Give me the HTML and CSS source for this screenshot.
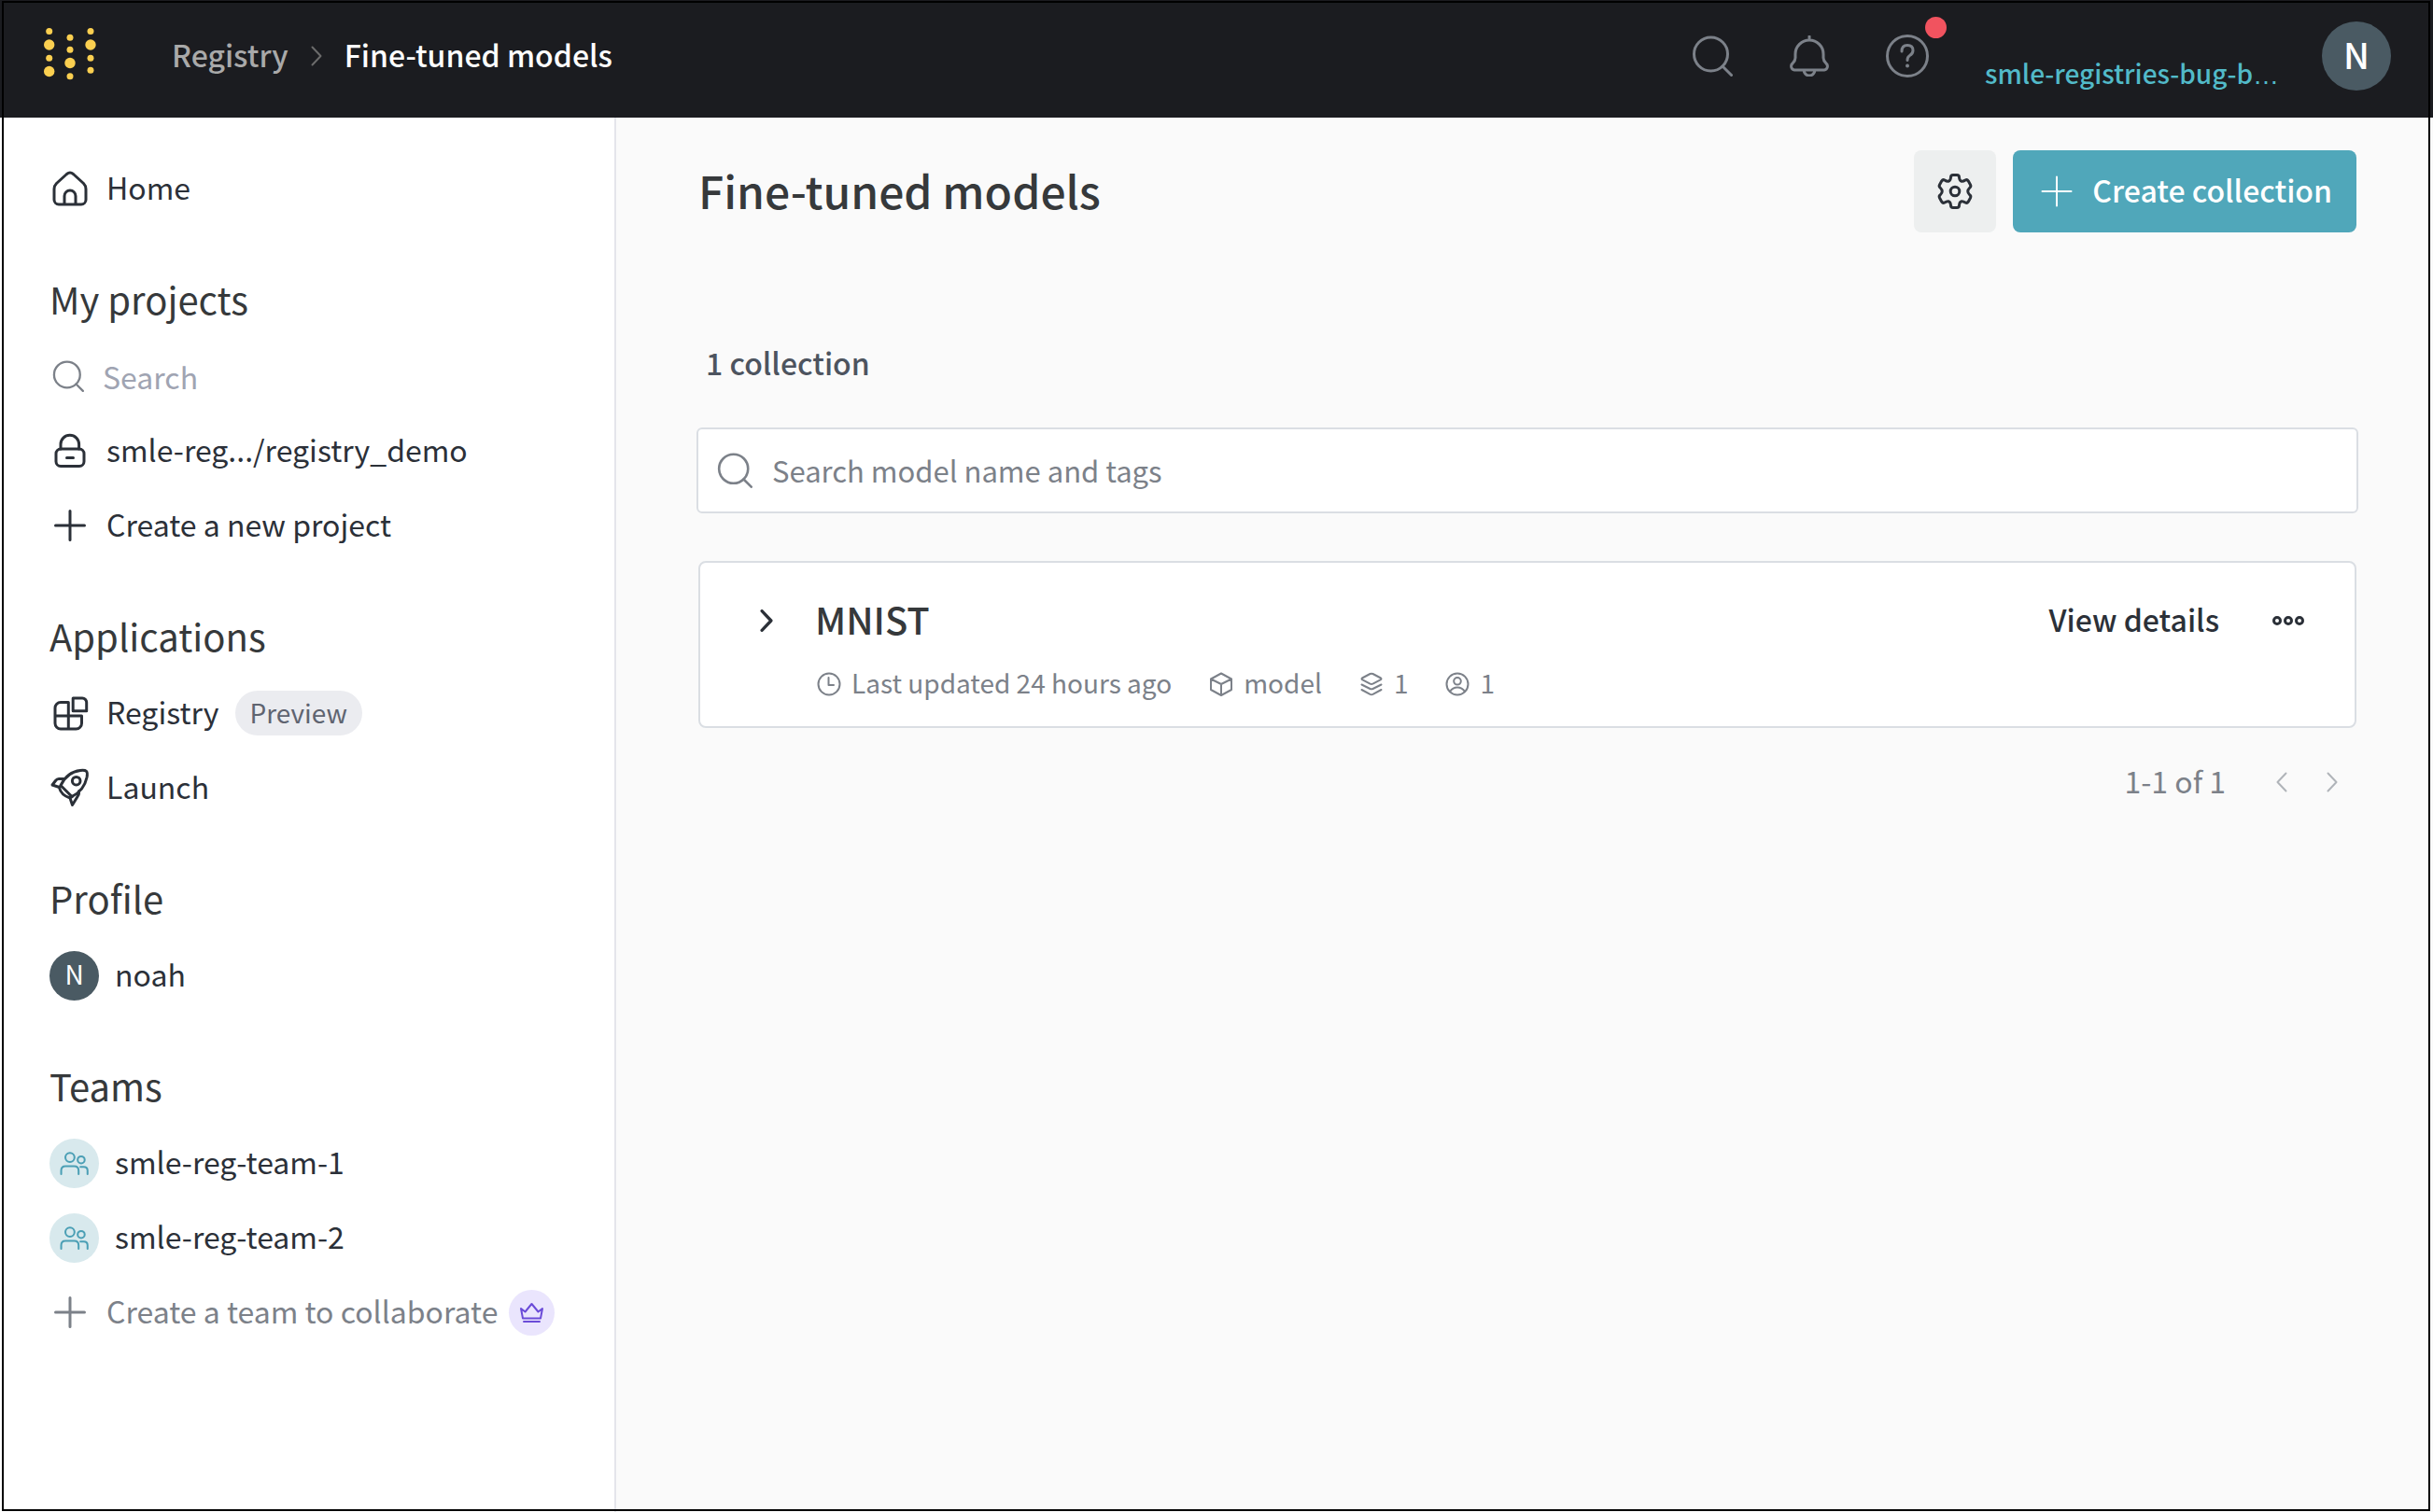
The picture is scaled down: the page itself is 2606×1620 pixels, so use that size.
FILE: index.html
```html
<!DOCTYPE html>
<html lang="en">
<head>
<meta charset="utf-8">
<meta name="viewport" content="width=device-width, initial-scale=1">
<title>Fine-tuned models</title>
<link rel="stylesheet" href="styles.css">
</head>
<body>
<svg class="sprite" aria-hidden="true">
  <symbol id="i-search" viewBox="0 0 44 44"><circle cx="20.500" cy="20" r="18"/><path d="M33 33l9.500 9.500"/></symbol>
  <symbol id="i-plus" viewBox="0 0 44 44"><path d="M22 6.500v31M6.500 22h31"/></symbol>
  <symbol id="i-right" viewBox="0 0 12 22"><path d="M1.500 1.500L10.500 11l-9 9.500"/></symbol>
  <symbol id="i-left" viewBox="0 0 12 22"><path d="M10.500 1.500L1.500 11l9 9.500"/></symbol>
  <symbol id="i-team" viewBox="-26 -26 52 52"><circle cx="-4.500" cy="-6.300" r="4.800"/><circle cx="7.300" cy="-3.700" r="3.700"/><path d="M-13.700 11.300V7.500q0-4.500 4.500-4.500H0q4.600 0 4.600 4.500v3.800M6.500 3.600h3.500q4 0 4 4v3.700"/></symbol>
</svg>

<header class="topbar">
  <a class="logo" href="#" aria-label="Dashboard">
    <svg width="56" height="58" viewBox="0 0 56 58">
      <circle cx="5.700" cy="5.500" r="3.500"/><circle cx="5.700" cy="20" r="5.700"/><circle cx="5.700" cy="34.300" r="3.500"/><circle cx="5.700" cy="48.500" r="5.700"/>
      <circle cx="28" cy="12.200" r="3.500"/><circle cx="28" cy="25.200" r="3.500"/><circle cx="28" cy="39.500" r="5.700"/><circle cx="28" cy="53.700" r="3.500"/>
      <circle cx="50" cy="5.500" r="3.500"/><circle cx="50" cy="20" r="5.700"/><circle cx="50" cy="34.300" r="3.500"/><circle cx="50" cy="47.200" r="3.500"/>
    </svg>
  </a>
  <nav class="crumbs" aria-label="Breadcrumb">
    <a class="text" href="#">Registry</a>
    <svg class="icon" width="12" height="22"><use href="#i-right"/></svg>
    <span class="text current">Fine-tuned models</span>
  </nav>
  <div class="tools">
    <button class="plain" aria-label="Search"><svg class="icon" width="44" height="44"><use href="#i-search"/></svg></button>
    <button class="plain" aria-label="Notifications">
      <svg class="icon" width="44" height="44" viewBox="0 0 44 44"><path d="M22 1v4M7 24v-4a15 15 0 0 1 30 0v4q0 3 3 6a4 4 0 0 1-2 7H6a4 4 0 0 1-2-7q3-3 3-6M16 37q1 6 6 6t6-6"/></svg>
    </button>
    <button class="plain help" aria-label="Help">
      <svg class="icon" width="46" height="46" viewBox="0 0 46 46"><circle cx="23" cy="23" r="21.500"/><path d="M17 18q0-6.500 6-6.500t6 5.500q0 3.500-3.500 5.500-2.500 1.500-2.500 5"/><circle class="solid" cx="23" cy="33.500" r="2"/></svg>
      <span class="dot"></span>
    </button>
    <a class="account" href="#">smle-registries-bug-b<span class="ellipsis">…</span></a>
    <button class="avatar large" aria-label="User menu">N</button>
  </div>
</header>

<div class="shell">
  <aside class="sidebar">
    <ul>
      <li><a class="row" href="#">
        <svg class="icon" width="44" height="44" viewBox="0 0 44 44"><path d="M18.500 6.500q3.500-3 7 0L36.500 16.500q2.500 2.500 2.500 6V34a5 5 0 0 1-5 5H10a5 5 0 0 1-5-5V22.500q0-3.500 2.500-6ZM16 39V30a6 6 0 0 1 12 0v9"/></svg>
        <span class="text">Home</span></a></li>
    </ul>
    <section>
      <h2><span class="text">My projects</span></h2>
      <label class="row find">
        <svg class="icon" width="34" height="34"><use href="#i-search"/></svg>
        <input type="text" placeholder="Search" aria-label="Search projects">
      </label>
      <ul>
        <li><a class="row" href="#">
          <svg class="icon" width="44" height="44" viewBox="0 0 44 44"><path d="M12 20v-5a9.800 9.800 0 0 1 19.600 0v5M18.500 29.500h7"/><rect x="7" y="20" width="30" height="18.500" rx="5"/></svg>
          <span class="text">smle-reg.../registry_demo</span></a></li>
        <li><a class="row" href="#"><svg class="icon" width="44" height="44"><use href="#i-plus"/></svg><span class="text">Create a new project</span></a></li>
      </ul>
    </section>
    <section>
      <h2><span class="text">Applications</span></h2>
      <ul>
        <li><a class="row" href="#">
          <svg class="icon" width="44" height="44" viewBox="0 0 44 44"><path d="M20.300 10.500H12a6 6 0 0 0-6 6V33a6 6 0 0 0 6 6h16.500a6 6 0 0 0 6-6v-8H6M20.300 10.500V39M25.200 6h10a4.500 4.500 0 0 1 4.500 4.500v9.300H25.200Z"/></svg>
          <span class="text">Registry</span><span class="pill">Preview</span></a></li>
        <li><a class="row" href="#">
          <svg class="icon" width="44" height="44" viewBox="0 0 44 44"><path d="M12 19.500Q19 5 33 3.500q5-.5 6.500.800T40 11Q37 25 24 31.500ZM12 19.500L10.500 22q2 8 11.500 11l2.500-1.500M15.500 12.500H10q-2 0-3.500 2L3 19l7.500 2.500M31.500 25.500V28q0 2-1.500 3.500L24.500 40.500 22 33"/><circle cx="28.700" cy="14.700" r="4.300"/></svg>
          <span class="text">Launch</span></a></li>
      </ul>
    </section>
    <section>
      <h2><span class="text">Profile</span></h2>
      <ul><li><a class="row" href="#"><span class="avatar small">N</span><span class="text">noah</span></a></li></ul>
    </section>
    <section>
      <h2><span class="text">Teams</span></h2>
      <ul>
        <li><a class="row" href="#"><svg class="icon team" width="53" height="53"><use href="#i-team"/></svg><span class="text">smle-reg-team-1</span></a></li>
        <li><a class="row" href="#"><svg class="icon team" width="53" height="53"><use href="#i-team"/></svg><span class="text">smle-reg-team-2</span></a></li>
        <li><a class="row muted" href="#"><svg class="icon" width="44" height="44"><use href="#i-plus"/></svg><span class="text">Create a team to collaborate</span>
          <svg class="icon crown" width="49" height="49" viewBox="0 0 49 49"><path d="M13 20l4.500 3.500 7-8.500 7 8.500L36 20l-2 10.500H15ZM16 34h17"/></svg></a></li>
      </ul>
    </section>
  </aside>

  <main class="main">
    <div class="titlebar">
      <h1 class="text">Fine-tuned models</h1>
      <button class="gear" aria-label="Settings">
        <svg class="icon" width="40" height="40" viewBox="-20 -20 40 40"><path d="M-4.500-15q0-2.500 2.500-2.500h4q2.500 0 2.500 2.500Q4.800-11.200 7-10.700 9-10.500 11-12q2-1 3.200.8L16.500-7q1 2-.8 3.200Q11.800 0 15.700 3.800 17.500 5 16.500 7l-2.300 4.200Q13 13 11 12 9 10.500 7 10.700 4.800 11.200 4.500 15q0 2.500-2.500 2.500h-4q-2.500 0-2.500-2.500Q-4.800 11.200-7 10.700-9 10.500-11 12q-2 1-3.200-.8L-16.500 7q-1-2 .8-3.200Q-11.800 0-15.700-3.800-17.500-5-16.500-7l2.300-4.200Q-13-13-11-12-9-10.500-7-10.700-4.800-11.200-4.500-15Z"/><circle r="4.800"/></svg>
      </button>
      <button class="create"><svg class="icon" width="36" height="36" viewBox="0 0 36 36"><path d="M18 2.500v31M2.500 18h31"/></svg><span class="text">Create collection</span></button>
    </div>
    <p class="count">1 collection</p>
    <label class="search">
      <svg class="icon" width="38" height="38"><use href="#i-search"/></svg>
      <input type="text" placeholder="Search model name and tags" aria-label="Search model name and tags">
    </label>
    <article class="card">
      <button class="plain expand" aria-label="Expand"><svg class="icon" width="14" height="24"><use href="#i-right"/></svg></button>
      <h3 class="text">MNIST</h3>
      <a class="details text" href="#">View details</a>
      <button class="plain more" aria-label="More actions"><svg class="icon" width="36" height="12" viewBox="0 0 36 12"><circle cx="6" cy="6" r="3.500"/><circle cx="18" cy="6" r="3.500"/><circle cx="30" cy="6" r="3.500"/></svg></button>
      <ul class="meta">
        <li><svg class="icon" width="26" height="26" viewBox="0 0 26 26"><circle cx="13" cy="13" r="11.500"/><path d="M12.500 6v8H18"/></svg><span class="text">Last updated 24 hours ago</span></li>
        <li><svg class="icon" width="26" height="26" viewBox="0 0 26 26"><path d="M13 1.500l11 6v11.500L13 25 2 19V7.500ZM2 7.500l11 5.500 11-5.500M13 13v12"/></svg><span class="text">model</span></li>
        <li><svg class="icon" width="26" height="26" viewBox="0 0 26 26"><path d="M11.500 2q1.500-.7 3 0l8.500 4.500q1 .8 0 1.600L14.500 12.600q-1.500.7-3 0L3 8.100q-1-.8 0-1.600ZM2.500 13.500l9 4.500q1.500.7 3 0l9-4.500M2.500 19l9 4.800q1.500.7 3 0l9-4.800"/></svg><span class="text">1</span></li>
        <li><svg class="icon" width="26" height="26" viewBox="0 0 26 26"><circle cx="13" cy="13" r="11.500"/><circle cx="13" cy="9.800" r="3.800"/><path d="M5 21q3-4.500 8-4.500t8 4.500"/></svg><span class="text">1</span></li>
      </ul>
    </article>
    <nav class="pager" aria-label="Pages">
      <span class="text">1-1 of 1</span>
      <button class="plain" aria-label="Previous page"><svg class="icon" width="12" height="22"><use href="#i-left"/></svg></button>
      <button class="plain" aria-label="Next page"><svg class="icon" width="12" height="22"><use href="#i-right"/></svg></button>
    </nav>
  </main>
</div>
</body>
</html>
```
FILE: styles.css
```css
* { box-sizing: border-box; }

body {
  margin: 0;
  min-height: 100vh;
  display: flex;
  flex-direction: column;
  background: #fafafa;
  color: #2b3038;
  font: 32px/40px "Noto Sans CJK SC", "Noto Sans", sans-serif;
}

/* thin outline round the whole window */
body::after {
  content: "";
  position: fixed;
  inset: 1px 3px 1px 2px;
  border: 2px solid #000;
  pointer-events: none;
}

h1, h2, h3, p, ul { margin: 0; padding: 0; font-weight: 400; }
ul { list-style: none; }
a { color: inherit; text-decoration: none; }
button, input { font: inherit; color: inherit; margin: 0; padding: 0; border: 0; background: none; }
input { outline: none; min-width: 0; flex: 1; }
button { cursor: pointer; }

.sprite { position: absolute; width: 0; height: 0; }
.icon {
  display: block;
  flex: none;
  fill: none;
  stroke: currentColor;
  stroke-width: 3;
  stroke-linecap: round;
  stroke-linejoin: round;
}
.solid { fill: currentColor; stroke: none; }
.text { padding-bottom: 4px; white-space: nowrap; }
.plain { display: flex; align-items: center; justify-content: center; }

/* top bar */
.topbar {
  display: flex;
  align-items: center;
  height: 126px;
  padding: 0 45px 6px 47px;
  background: #1b1c20;
}
.logo { display: block; margin-right: 81px; padding-bottom: 6px; }
.logo svg { display: block; fill: #fbcf50; }
.crumbs { display: flex; align-items: center; gap: 24px; color: #a9a9a9; font-weight: 500; }
.crumbs .icon { color: #6b6b6b; stroke-width: 2; }
.current { color: #fff; }
.tools { display: flex; align-items: center; gap: 60px; height: 100%; margin-left: auto; color: #7c8189; }
.help { position: relative; }
.dot {
  position: absolute;
  right: -19px;
  top: -19px;
  width: 23px;
  height: 23px;
  border-radius: 50%;
  background: #f1535f;
}
.account { align-self: flex-end; margin: 0 -14px 19px 0; color: #52bac9; font-size: 28px; font-weight: 500; }
.ellipsis { font-family: "Liberation Sans", sans-serif; }
.avatar {
  display: flex;
  align-items: center;
  justify-content: center;
  border-radius: 50%;
  background: #4a5a63;
  color: #fff;
  font-size: 28px;
  padding-bottom: 4px;
}
.avatar.large { width: 74px; height: 74px; font-size: 38px; font-weight: 500; }
.avatar.small { width: 53px; height: 53px; }

/* page body */
.shell { flex: 1; display: grid; grid-template-columns: 660px 1fr; }
.sidebar { padding: 36px 0 40px 53px; background: #fff; border-right: 2px solid #e4e5eb; }
.sidebar section { margin-top: 39px; }
.sidebar h2 { display: flex; align-items: center; height: 82px; color: #36393b; font-size: 40px; }
.row { display: flex; align-items: center; gap: 17px; height: 80px; }
.find { gap: 20px; padding-left: 3px; color: #7c8189; }
.find input::placeholder { color: #a0a4b2; opacity: 1; }
.pill {
  height: 48px;
  padding: 0 16px;
  border-radius: 24px;
  background: #ebecf0;
  color: #5f6470;
  font-size: 28px;
  line-height: 46px;
}
.team { border-radius: 50%; background: #d8e9ed; color: #4b9fb5; stroke-width: 2; }
.muted { gap: 12px; color: #7c8189; }
.muted .icon:first-child { margin-right: 5px; }
.crown { border-radius: 50%; background: #eae5fd; color: #6b4cd8; stroke-width: 2; }

.main { padding: 35px 82px 40px 88px; }
.titlebar { display: flex; align-items: center; gap: 18px; }
h1 { margin-right: auto; color: #36393b; font-size: 48px; font-weight: 500; }
.gear { display: grid; place-items: center; width: 88px; height: 88px; border-radius: 8px; background: #edefef; }
.create {
  display: flex;
  align-items: center;
  gap: 20px;
  height: 88px;
  padding: 0 26px 0 29px;
  border-radius: 8px;
  background: #50a7ba;
  color: #fff;
  font-weight: 500;
}
.create .icon { stroke-width: 2; }
.count { margin: 119px 0 50px 8px; color: #4d545f; font-weight: 500; }
.search {
  display: flex;
  align-items: center;
  gap: 21px;
  height: 92px;
  margin: 0 -2px;
  padding: 0 20px;
  border: 2px solid #dadee3;
  border-radius: 6px;
  background: #fff;
  color: #7c8189;
}
.search input { font-size: 31px; }
.search input::placeholder { color: #7c8189; opacity: 1; }
.card {
  display: grid;
  grid-template-columns: 44px 1fr auto 44px;
  align-items: center;
  column-gap: 30px;
  row-gap: 24px;
  margin-top: 51px;
  padding: 38px 49px 25px;
  border: 2px solid #dadee3;
  border-radius: 8px;
  background: #fff;
}
.card h3 { height: 48px; color: #36393b; font-size: 40px; line-height: 44px; font-weight: 500; }
.details { margin-right: 22px; font-weight: 500; }
.meta { grid-column: 2 / -1; display: flex; gap: 40px; padding-left: 2px; color: #7c8189; font-size: 28px; line-height: 40px; }
.meta li { display: flex; align-items: center; gap: 11px; height: 40px; }
.meta .icon { stroke-width: 2; }
.pager {
  display: flex;
  align-items: center;
  justify-content: flex-end;
  gap: 22px;
  height: 40px;
  margin-top: 38px;
  padding-right: 10px;
  color: #7c8189;
}
.pager .text { margin-right: 22px; }
.pager button { width: 32px; height: 40px; color: #b0b4b9; }
.pager .icon { stroke-width: 2; }
```
